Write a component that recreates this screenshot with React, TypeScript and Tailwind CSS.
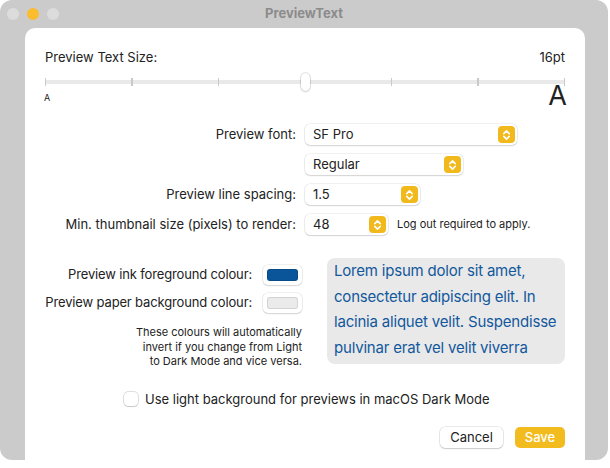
import React from 'react';

const Stepper: React.FC = () => (
  <span className="flex h-[17px] w-[17px] items-center justify-center rounded-[4px] bg-[#f2b91c]">
    <svg width="9" height="12" viewBox="0 0 9 12" fill="none" stroke="white" strokeWidth="1.6" strokeLinecap="round" strokeLinejoin="round">
      <path d="M1.8 4.6 4.5 1.9 7.2 4.6" />
      <path d="M1.8 7.4 4.5 10.1 7.2 7.4" />
    </svg>
  </span>
);

const Popup: React.FC<{ value: string; width: string }> = ({ value, width }) => (
  <div className={`flex h-[21px] items-center justify-between rounded-[5px] bg-white pl-[8px] pr-[2px] shadow-[0_0_0_0.5px_rgba(0,0,0,0.12),0_1px_1.5px_rgba(0,0,0,0.12)] ${width}`}>
    <span className="text-[13px] text-[#222]">{value}</span>
    <Stepper />
  </div>
);

const ColourWell: React.FC<{ colour: string }> = ({ colour }) => (
  <div className="flex h-[20px] w-[39px] shrink-0 items-center justify-center rounded-[5px] bg-white shadow-[0_0_0_0.5px_rgba(0,0,0,0.12),0_1px_1.5px_rgba(0,0,0,0.12)]">
    <span className={`h-[12px] w-[31px] rounded-[3px] border border-black/10 ${colour}`} />
  </div>
);

const ticks = [0, 1, 2, 3, 4, 5, 6];

const App: React.FC = () => {
  return (
    <div className="h-[468px] w-[610px] overflow-hidden bg-white font-['Inter','Liberation_Sans',sans-serif] text-[#222]">
      <div className="relative h-[460px] w-[608px] rounded-[12px] bg-[#cbcbcb]">
        <div className="relative flex h-[28px] items-center">
          <div className="flex items-center gap-[8px] pl-[7px]">
            <span className="h-[12px] w-[12px] rounded-full bg-[#dcdcdc]" />
            <span className="h-[12px] w-[12px] rounded-full bg-[#fbbc2e]" />
            <span className="h-[12px] w-[12px] rounded-full bg-[#dcdcdc]" />
          </div>
          <span className="absolute left-0 right-0 text-center text-[13px] font-bold text-[#8b8b8b]">PreviewText</span>
        </div>

        <div className="ml-[25px] h-[440px] w-[560px] rounded-t-[10px] bg-white px-[20px] pt-[21px]">
          <div className="flex items-center justify-between text-[13px] leading-[16px]">
            <span>Preview Text Size:</span>
            <span>16pt</span>
          </div>

          <div className="relative mt-[7px] h-[20px]">
            <div className="absolute left-0 right-0 top-[8px] h-[4px] rounded-full bg-[#e9e9e9]" />
            <div className="absolute inset-0 flex justify-between">
              {ticks.map(t => (
                <div key={t} className="flex h-[20px] w-[1px] items-center justify-center">
                  {t === 3 ? (
                    <span className="h-[18px] w-[9px] shrink-0 rounded-full bg-white shadow-[0_0_0_0.5px_rgba(0,0,0,0.2),0_1px_2px_rgba(0,0,0,0.15)]" />
                  ) : (
                    <span className="h-[8px] w-[1.5px] shrink-0 bg-[#c9c9c9]" />
                  )}
                </div>
              ))}
            </div>
          </div>

          <div className="flex items-start justify-between">
            <span className="ml-[-1px] mt-[1px] text-[9px] leading-[10px]">A</span>
            <span className="mr-[-2px] -mt-[9px] text-[27px] leading-[26px]">A</span>
          </div>

          <div className="mt-[15px] flex flex-col gap-[9px] text-[13px]">
            <div className="flex items-center gap-[9px]">
              <span className="w-[251px] text-right">Preview font:</span>
              <Popup value="SF Pro" width="w-[212px]" />
            </div>
            <div className="flex items-center gap-[9px]">
              <span className="w-[251px]" />
              <Popup value="Regular" width="w-[158px]" />
            </div>
            <div className="flex items-center gap-[9px]">
              <span className="w-[251px] text-right">Preview line spacing:</span>
              <Popup value="1.5" width="w-[115px]" />
            </div>
            <div className="flex items-center gap-[9px]">
              <span className="w-[251px] whitespace-nowrap text-right">Min. thumbnail size (pixels) to render:</span>
              <Popup value="48" width="w-[83px]" />
              <span className="whitespace-nowrap text-[11px]">Log out required to apply.</span>
            </div>
          </div>

          <div className="mt-[23px] flex gap-[25px]">
            <div className="flex w-[257px] flex-col items-end">
              <div className="mt-[7px] flex items-center gap-[11px] whitespace-nowrap text-[13px] tracking-[-0.15px]">
                <span>Preview ink foreground colour:</span>
                <ColourWell colour="bg-[#0a5499]" />
              </div>
              <div className="mt-[8px] flex items-center gap-[11px] whitespace-nowrap text-[13px] tracking-[-0.15px]">
                <span>Preview paper background colour:</span>
                <ColourWell colour="bg-[#ebebeb]" />
              </div>
              <p className="mt-[12px] whitespace-nowrap text-right text-[11px] leading-[14.5px]">
                These colours will automatically
                <br />
                invert if you change from Light
                <br />
                to Dark Mode and vice versa.
              </p>
            </div>
            <div className="h-[106px] w-[238px] whitespace-nowrap rounded-[8px] bg-[#e9e9e9] px-[7px] text-[15px] leading-[25.5px] tracking-[-0.2px] text-[#12589c]">
              Lorem ipsum dolor sit amet,
              <br />
              consectetur adipiscing elit. In
              <br />
              lacinia aliquet velit. Suspendisse
              <br />
              pulvinar erat vel velit viverra
            </div>
          </div>

          <div className="mt-[21px] flex items-center gap-[7px] pl-[79px] text-[13px]">
            <span className="h-[14px] w-[14px] rounded-[4px] bg-white shadow-[0_0_0_0.5px_rgba(0,0,0,0.25),0_1px_1px_rgba(0,0,0,0.1)]" />
            <span>Use light background for previews in macOS Dark Mode</span>
          </div>

          <div className="mt-[18px] flex justify-end gap-[12px] text-[13px]">
            <button className="h-[21px] w-[63px] rounded-[5px] bg-white shadow-[0_0_0_0.5px_rgba(0,0,0,0.15),0_1px_1.5px_rgba(0,0,0,0.15)]">Cancel</button>
            <button className="h-[21px] w-[50px] rounded-[5px] bg-[#f2bb1e] font-medium text-white">Save</button>
          </div>
        </div>
      </div>
    </div>
  );
};

export default App;
